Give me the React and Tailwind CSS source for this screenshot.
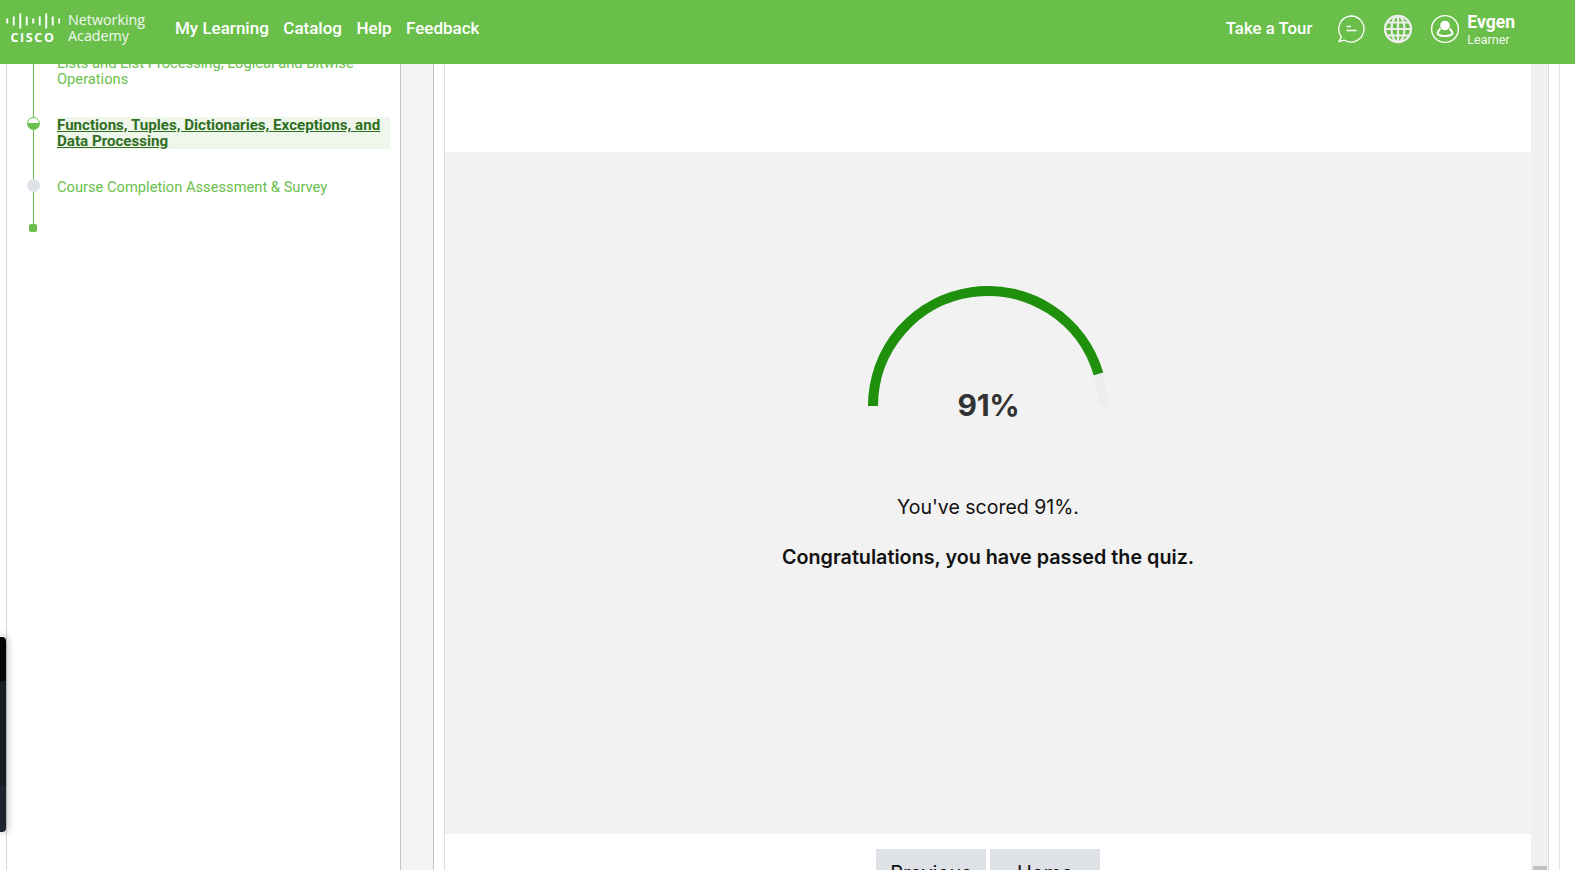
import React from "react";

function CiscoLogo() {
  const bars = [5, 9, 15, 9, 5, 9, 15, 9, 5];
  return (
    <div className="flex flex-col items-center w-[54px]">
      <svg width="54" height="16" viewBox="0 0 54 16" fill="#fff">
        {bars.map((h, i) => (
          <rect key={i} x={i * 6.5 + 0.3} y={8 - h / 2} width="1.9" height={h} />
        ))}
      </svg>
      <span className="font-['Open_Sans',sans-serif] text-[12.5px] leading-[13px] font-bold tracking-[1.6px] text-white mt-[2px]">CISCO</span>
    </div>
  );
}

function ChatIcon() {
  return (
    <svg width="30" height="30" viewBox="0 0 30 30" fill="none" stroke="#fff" strokeWidth="1.3">
      <path d="M15 2a13 13 0 1 1-6.6 24.2L3 27.5l2.4-4.7A13 13 0 0 1 15 2z" />
      <path d="M10.5 12.5h4.5M10.5 16.5h10" />
    </svg>
  );
}

function GlobeIcon() {
  return (
    <svg width="30" height="30" viewBox="0 0 30 30" fill="none" stroke="#eee" strokeWidth="2.1">
      <circle cx="15" cy="15" r="13" strokeWidth="2.3" />
      <ellipse cx="15" cy="15" rx="6.5" ry="13" />
      <path d="M15 2v26M2 15h26M4 8.5h22M4 21.5h22" />
    </svg>
  );
}

function UserIcon() {
  return (
    <svg width="30" height="30" viewBox="0 0 30 30" fill="none" stroke="#fff" strokeWidth="1.4">
      <circle cx="15" cy="15" r="13.4" />
      <circle cx="15" cy="11.5" r="4.8" fill="#fff" stroke="none" />
      <path d="M10.5 14.5c-1.5 1.5-3 3.7-3 5 0 1.2 3.5 2.6 7.5 2.6s7.5-1.4 7.5-2.6c0-1.3-1.5-3.5-3-5" strokeWidth="2" />
    </svg>
  );
}

function Header() {
  return (
    <header className="relative z-10 h-16 shrink-0 bg-[#6abf4b] flex items-center justify-between pl-[6px] pr-[60px] pb-[6px] text-white font-['Roboto',sans-serif]">
      <div className="flex items-center">
        <div className="flex items-center mb-[2px]">
          <CiscoLogo />
          <div className="ml-[8px] w-[88px] font-['Open_Sans',sans-serif] text-[14.3px] leading-[16px] text-[#f2f8ef]">
            <div>Networking</div>
            <div>Academy</div>
          </div>
        </div>
        <nav className="ml-[19px] flex items-center gap-[14.5px] text-[17px] font-medium">
          <span>My Learning</span>
          <span>Catalog</span>
          <span>Help</span>
          <span>Feedback</span>
        </nav>
      </div>
      <div className="flex items-center">
        <span className="text-[16.8px] font-medium mr-[24px]">Take a Tour</span>
        <ChatIcon />
        <span className="ml-[17px]"><GlobeIcon /></span>
        <span className="ml-[17px]"><UserIcon /></span>
        <div className="ml-[7px] mt-[2px] flex flex-col">
          <span className="text-[17.5px] leading-[17px] font-bold">Evgen</span>
          <span className="text-[12.5px] leading-[15px] mt-[1px] text-[#f2f8ef]">Learner</span>
        </div>
      </div>
    </header>
  );
}

function Sidebar() {
  return (
    <aside className="ml-[6px] w-[395px] shrink-0 border-x border-x-[#c4c4c4] border-l-[#d4d4d4] bg-white relative font-['Roboto',sans-serif] text-[14.7px] leading-4 text-[#6abf4b]">
      <div className="absolute left-[26px] top-0 h-[164px] w-px bg-[#6abf4b]" />
      <div className="relative -mt-[9px] pl-[50px] pr-[10px]">
        <div className="w-[320px]">Lists and List Processing, Logical and Bitwise Operations</div>
        <div className="relative mt-[30px] bg-[#eff6ec] h-8 text-[15.13px] font-bold text-[#2f6f21] underline">
          <span className="absolute -left-[30px] top-0 size-[13px] rounded-full border border-[#6abf4b] bg-[linear-gradient(#fff_50%,#6abf4b_50%)]" />
          Functions, Tuples, Dictionaries, Exceptions, and Data Processing
        </div>
        <div className="relative mt-[30px]">
          <span className="absolute -left-[30px] top-0 size-[13px] rounded-full bg-[#dee1e6]" />
          Course Completion Assessment &amp; Survey
        </div>
        <span className="block relative -ml-[28px] mt-[29px] size-2 rounded-[2px] bg-[#6abf4b]" />
      </div>
    </aside>
  );
}

function Gauge() {
  const r = 115;
  const cx = 120;
  const cy = 120;
  const a = Math.PI * (1 - 0.91);
  const ex = cx + r * Math.cos(a);
  const ey = cy - r * Math.sin(a);
  return (
    <svg width="240" height="120" viewBox="0 0 240 120" fill="none" strokeWidth="10">
      <path d={`M5 120A${r} ${r} 0 0 1 235 120`} stroke="#eeeeee" />
      <path d={`M5 120A${r} ${r} 0 0 1 ${ex} ${ey}`} stroke="#1e900c" />
    </svg>
  );
}

function Main() {
  return (
    <main className="flex-1 min-w-0 border-l border-[#dddddd] bg-white flex flex-col font-['Inter',sans-serif]">
      <div className="h-[88px] shrink-0" />
      <section className="h-[682px] shrink-0 bg-[#f2f2f2] flex flex-col items-center pt-[134px] text-[#111]">
        <Gauge />
        <div className="-mt-[19px] ml-[1px] text-[30px] leading-9 font-bold tracking-[-0.3px] text-[#333]">91%</div>
        <p className="mt-[70px] text-[19.5px] leading-7">You've scored 91%.</p>
        <p className="mt-[22px] text-[19.75px] leading-7 font-semibold">Congratulations, you have passed the quiz.</p>
      </section>
      <div className="flex justify-center gap-1 pt-[15px]">
        <button className="w-[110px] h-12 bg-[#dee1e6] text-[20px] text-[#111]">Previous</button>
        <button className="w-[110px] h-12 bg-[#dee1e6] text-[20px] text-[#111]">Home</button>
      </div>
    </main>
  );
}

export default function App() {
  return (
    <div className="relative h-[870px] w-[1575px] overflow-hidden bg-white flex flex-col">
      <Header />
      <div className="flex flex-1 min-h-0">
        <Sidebar />
        <div className="w-8 shrink-0 bg-[#f3f4f6]" />
        <div className="w-[11px] shrink-0 border-l border-[#c4c4c4] bg-white" />
        <Main />
        <div className="w-[17px] shrink-0 bg-[#f0f0f0] flex flex-col justify-end items-center">
          <div className="w-[14px] h-1 bg-[#c2c2c2]" />
        </div>
        <div className="w-[11px] shrink-0 border-l border-[#dcdcdc] bg-white" />
        <div className="w-4 shrink-0 border-l border-[#e2e2e2] bg-white" />
      </div>
      <div className="absolute left-0 top-[637px] w-[6px] h-[195px] rounded-r-[4px] shadow-[0_0_8px_rgba(0,0,0,0.4)] overflow-hidden flex flex-col">
        <div className="h-[44px] bg-[#050608]" />
        <div className="h-[105px] bg-[#181d22]" />
        <div className="flex-1 bg-[#1e2430]" />
      </div>
    </div>
  );
}
